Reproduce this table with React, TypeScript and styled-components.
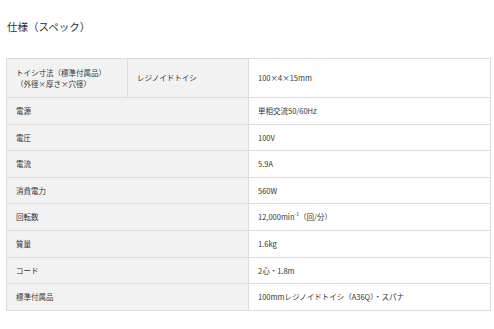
import React from 'react'
import styled, { createGlobalStyle } from 'styled-components'

const GlobalStyle = createGlobalStyle`
  html, body {
    margin: 0;
    padding: 0;
    background: #fff;
  }
  body {
    font-family: "Noto Sans CJK JP", "Noto Sans", sans-serif;
    color: #333;
  }
`

const Page = styled.div`
  width: 494px;
  height: 329px;
  box-sizing: border-box;
  padding: 20px 3px 0 6px;
  overflow: hidden;
`

const Title = styled.h2`
  margin: 0 0 0 1px;
  font-size: 10.5px;
  line-height: 14px;
  font-weight: 400;
  color: #2f2f2f;
`

const Table = styled.table`
  margin-top: 24px;
  width: 485px;
  border-collapse: collapse;
  font-size: 7.5px;
  color: #333;
`

const Row = styled.tr<{ tall?: boolean }>`
  height: ${({ tall }) => (tall ? '39px' : '26.6px')};
`

const Cell = styled.td<{ head?: boolean; w?: number }>`
  border: 1px solid #dcdcdc;
  background: ${({ head }) => (head ? '#f2f2f2' : '#fff')};
  padding: 0 0 0 9px;
  line-height: 11.5px;
  vertical-align: middle;
  width: ${({ w }) => (w ? `${w}px` : 'auto')};
  box-sizing: border-box;
`

const Sup = styled.sup`
  font-size: 5px;
  vertical-align: 4px;
  line-height: 0;
`

const specs: [string, React.ReactNode][] = [
  ['電源', '単相交流50/60Hz'],
  ['電圧', '100V'],
  ['電流', '5.9A'],
  ['消費電力', '560W'],
  [
    '回転数',
    <>
      12,000min<Sup>-1</Sup>（回/分）
    </>,
  ],
  ['質量', '1.6kg'],
  ['コード', '2心・1.8m'],
  ['標準付属品', '100mmレジノイドトイシ（A36Q）・スパナ'],
]

export default function App() {
  return (
    <Page>
      <GlobalStyle />
      <Title>仕様（スペック）</Title>
      <Table>
        <tbody>
          <Row tall>
            <Cell head w={121}>
              トイシ寸法（標準付属品）
              <br />
              （外径×厚さ×穴径）
            </Cell>
            <Cell head w={121}>
              レジノイドトイシ
            </Cell>
            <Cell>100×4×15mm</Cell>
          </Row>
          {specs.map(([k, v]) => (
            <Row key={k}>
              <Cell head colSpan={2}>
                {k}
              </Cell>
              <Cell>{v}</Cell>
            </Row>
          ))}
        </tbody>
      </Table>
    </Page>
  )
}
